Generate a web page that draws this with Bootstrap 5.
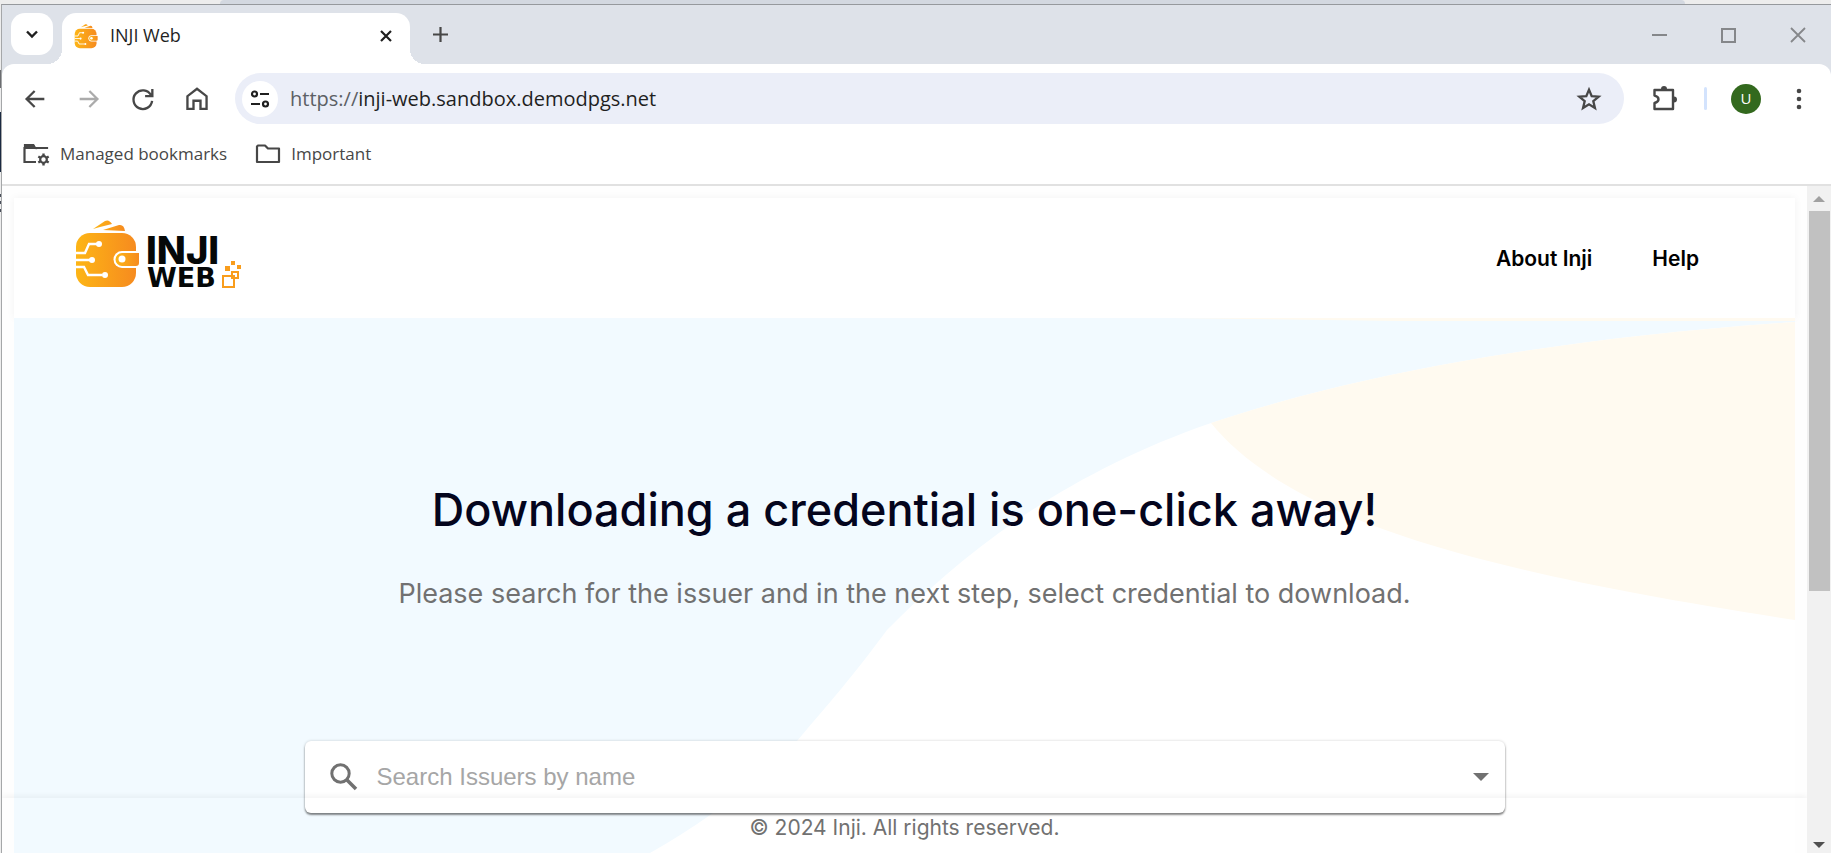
<!DOCTYPE html>
<html lang="en">
<head>
<meta charset="utf-8">
<meta name="viewport" content="width=device-width, initial-scale=1">
<title>INJI Web</title>
<link href="https://cdn.jsdelivr.net/npm/bootstrap@5.3.0/dist/css/bootstrap.min.css" rel="stylesheet">
<style>
  body { background: linear-gradient(#ededed 70px, #6b6d70 70px 88px, #ededed 88px 112px, #1b2a41 112px 172px, #ededed 172px 194px, #4a4f5a 194px 197px, #ededed 197px 201px, #4a4f5a 201px 204px, #ededed 204px 209px, #4a4f5a 209px 212px, #ededed 212px); font-family: "Open Sans", sans-serif; color: #474747; }
  .backdrop { height: 4px; }
  .backdrop span { display: block; height: 4px; margin-left: 12%; width: 80%; background: #d3d8e0; border-radius: 12px 12px 0 0; }
  .browser { margin-left: 1px; border-left: 1px solid #a5a7a9; border-top: 1px solid #96999d; background: #fff; }
  .icon-btn { border: 0; background: none; padding: 0; color: #474747; display: flex; align-items: center; justify-content: center; }
  .tabstrip { background: #dee2e9; height: 59px; }
  .tab-search { width: 42px; height: 42px; margin: 8px 9px 0; background: #fff; border-radius: 14px; color: #1f1f1f; }
  .tab-item { position: relative; width: 348px; height: 51px; margin-top: 8px; padding: 0 17px 6px 12px; background: #fff; border-radius: 14px 14px 0 0; color: #1f1f1f; font-size: 18px; }
  .tab-item .icon-btn { color: #1f1f1f; }
  .tab-item::before, .tab-item::after { content: ""; position: absolute; bottom: 0; width: 15px; height: 15px; }
  .tab-item::before { right: 100%; background: radial-gradient(circle at 0 0, transparent 15px, #fff 15px); }
  .tab-item::after { left: 100%; background: radial-gradient(circle at 100% 0, transparent 15px, #fff 15px); }
  .new-tab { width: 36px; margin-left: 12px; height: 59px; }
  .win-controls { gap: 53px; padding-right: 25px; }
  .win-controls .icon-btn { color: #85878a; }
  .toolbar-wrap { background: #dee2e9; }
  .toolbar-row { background: #fff; height: 69px; border-radius: 12px 12px 0 0; padding: 0 18px 0 19px; gap: 24px; }
  .nav-btns { gap: 26px; }
  .omnibox { height: 51px; background: #ebeef8; border-radius: 26px; padding: 0 21px 0 7px; }
  .site-info { width: 36px; height: 36px; border-radius: 50%; background: #fff; color: #1f1f1f; }
  .url-text { font-size: 20px; color: #1f1f1f; margin-left: 12px; }
  .url-text span { color: #5c6065; }
  .tb-divider { width: 3px; height: 23px; background: #d3e3fd; border-radius: 2px; }
  .avatar { width: 30px; height: 30px; border-radius: 50%; background: #33691e; color: #fff; font-size: 15px; }
  .bookmarks { height: 51px; padding: 0 20px 10px; gap: 28px; font-size: 17px; }
  .bookmarks a { color: #474747; text-decoration: none; gap: 10px; }
  .edge { border-top: 2px solid #e1e1e1; }
  .viewport { font-family: Inter, sans-serif; background: #fefefe; }
  .page-body { padding: 12px 12px 0; }
  .site-header { height: 120px; padding: 0 96px 0 60px; background: #fff; box-shadow: 0 0 8px rgba(0,0,0,.05); flex: none; }
  .site-header nav { gap: 60px; padding-top: 2px; }
  .site-header nav a { color: #000; font-weight: 600; font-size: 21px; text-decoration: none; }
  .hero { background: #fff; }
  .hero-art { inset: 0; width: 100%; height: 100%; }
  .hero-in { padding-top: 162px; }
  .hero h1 { font-size: 45px; line-height: 60px; font-weight: 500; color: #04051d; margin: 0; }
  .hero p { font-size: 27px; line-height: 36px; color: #717171; margin: 36px 0 0; }
  .search-box { width: 1200px; max-width: 90%; height: 72px; margin-top: 129px; background: #fff; border-radius: 6px; padding: 0 16px 0 24px; box-shadow: 0 2px 2px rgba(0,0,0,.45), 0 0 3px rgba(0,0,0,.18); }
  .search-box input { border: 0; outline: 0; background: none; font: 24px "Liberation Sans", sans-serif; color: #717171; margin-left: 16px; min-width: 0; }
  .search-box input::placeholder { color: #a6a6a6; opacity: 1; }
  .site-footer { left: 0; right: 0; bottom: 0; height: 55px; padding-top: 14px; font-size: 21px; line-height: 32px; color: #717171; box-shadow: 0 -2px 6px rgba(0,0,0,.05); }
  .scroll-col { width: 24px; background: #f1f1f1; padding: 10px 2px 5px; flex: none; }
  .thumb { height: 380px; background: #c1c1c1; width: 21px; margin-top: 9px; }
</style>
</head>
<body class="vh-100 overflow-hidden d-flex flex-column">
<div class="backdrop"><span></span></div>
<div class="browser flex-grow-1 d-flex flex-column overflow-hidden">

  <div class="tabstrip d-flex">
    <button class="icon-btn tab-search" aria-label="Search tabs"><svg width="14" height="14" viewBox="0 0 14 14" fill="none" stroke="currentColor" stroke-width="2.4"><path d="M2 4.500l5 5 5-5"/></svg></button>
    <div class="tab-item d-flex align-items-center">
      <svg width="24" height="26" viewBox="0 0 66 70"><use href="#wallet"/></svg>
      <span class="ms-2 ps-1 flex-grow-1">INJI Web</span>
      <button class="icon-btn" aria-label="Close tab"><svg width="14" height="14" viewBox="0 0 14 14" stroke="currentColor" stroke-width="2.2"><path d="M2 2l10 10M12 2L2 12"/></svg></button>
    </div>
    <button class="icon-btn new-tab" aria-label="New tab"><svg width="17" height="17" viewBox="0 0 17 17" stroke="currentColor" stroke-width="2.2"><path d="M8.500 1v15M1 8.500h15"/></svg></button>
    <div class="win-controls d-flex align-items-center ms-auto">
      <button class="icon-btn" aria-label="Minimize"><svg width="16" height="16" viewBox="0 0 16 16"><path d="M0 7h15v2H0z" fill="currentColor"/></svg></button>
      <button class="icon-btn" aria-label="Maximize"><svg width="16" height="16" viewBox="0 0 16 16" fill="none" stroke="currentColor" stroke-width="2"><path d="M1 2h13v13H1z"/></svg></button>
      <button class="icon-btn" aria-label="Close"><svg width="16" height="16" viewBox="0 0 16 16" stroke="currentColor" stroke-width="1.800"><path d="M1 1l14 14M15 1L1 15"/></svg></button>
    </div>
  </div>

  <div class="toolbar-wrap">
    <div class="toolbar-row d-flex align-items-center">
      <div class="nav-btns d-flex">
        <button class="icon-btn" aria-label="Back"><svg width="28" height="28" viewBox="0 0 24 24" fill="currentColor"><path d="M7.200 13l5.200 5.200-1.400 1.400L3.400 12 11 4.400l1.400 1.400L7.200 11H20v2z"/></svg></button>
        <button class="icon-btn" aria-label="Forward"><svg width="28" height="28" viewBox="0 0 24 24" fill="#ababab"><path d="M16.800 13l-5.200 5.200 1.400 1.400 7.600-7.600L13 4.400l-1.400 1.400 5.200 5.200H4v2z"/></svg></button>
        <button class="icon-btn" aria-label="Reload"><svg width="28" height="28" viewBox="0 0 24 24" fill="none" stroke="currentColor" stroke-width="2"><path d="M18.800 8.600A8 8 0 1 0 19.800 13.600M20 3.500V9.500h-6.200"/></svg></button>
        <button class="icon-btn" aria-label="Home"><svg width="28" height="28" viewBox="0 0 24 24" fill="none" stroke="currentColor" stroke-width="2"><path d="M3.800 20.500V9.600L12 3.200l8.200 6.400v10.900h-5.200v-7H9v7z"/></svg></button>
      </div>
      <div class="omnibox d-flex align-items-center flex-grow-1">
        <button class="icon-btn site-info" aria-label="View site information"><svg width="20" height="20" viewBox="0 0 20 20" fill="none" stroke="currentColor" stroke-width="2.200"><circle cx="4.500" cy="5" r="2.500"/><path d="M10 5h9M1 15h9"/><circle cx="15.500" cy="15" r="2.500"/></svg></button>
        <div class="url-text flex-grow-1"><span>https://</span>inji-web.sandbox.demodpgs.net</div>
        <button class="icon-btn" aria-label="Bookmark this page"><svg width="28" height="28" viewBox="0 0 24 24" fill="none" stroke="currentColor" stroke-width="2"><path d="M12 4l2.300 5.500 6 .5-4.600 3.900 1.400 5.800-5.100-3.100-5.100 3.100 1.400-5.800L3.700 10l6-.5z"/></svg></button>
      </div>
      <button class="icon-btn" aria-label="Extensions"><svg width="32" height="32" viewBox="0 0 32 32"><path d="M6.500 7H25v19H6.500V20q4-1 4-3.800t-4-3.600V7z" fill="none" stroke="#474747" stroke-width="2.400" stroke-linejoin="round"/><path d="M13 6a3 3 0 0 1 6 0zM26 13.500a3 3 0 0 1 0 6z" fill="#474747"/></svg></button>
      <span class="tb-divider"></span>
      <button class="icon-btn avatar" aria-label="Profile">U</button>
      <button class="icon-btn" aria-label="Menu"><svg width="28" height="24" viewBox="0 0 28 24" fill="currentColor"><circle cx="14" cy="4" r="2.300"/><circle cx="14" cy="12" r="2.300"/><circle cx="14" cy="20" r="2.300"/></svg></button>
    </div>
  </div>
  <div class="bookmarks d-flex align-items-center">
    <a href="#" class="d-flex align-items-center"><svg width="28" height="24" viewBox="0 0 28 24"><path d="M25 7V6H2.500V20H14M3 5V3h8l2 3z" fill="none" stroke="#474747" stroke-width="2.200"/><path d="M2 2h10l2 4H2z" fill="#474747"/><circle cx="21.500" cy="17.500" r="3.300" fill="none" stroke="#474747" stroke-width="2.200"/><path d="M21.500 11.500v3M21.500 20.500v3M16.300 14.500l2.600 1.500M24.100 19l2.600 1.500M16.300 20.500l2.600-1.500M24.100 16l2.600-1.500" stroke="#474747" stroke-width="2.400"/></svg><span>Managed bookmarks</span></a>
    <a href="#" class="d-flex align-items-center"><svg width="26" height="22" viewBox="0 0 26 22" fill="none" stroke="#474747" stroke-width="2.200" stroke-linejoin="round"><path d="M3 2.500h7l3 3h11v13.500H2V3.500z"/></svg><span>Important</span></a>
  </div>
  <div class="edge"></div>

  <div class="viewport flex-grow-1 d-flex overflow-hidden">
    <main class="position-relative flex-grow-1 d-flex flex-column page-body overflow-hidden">
      <header class="site-header d-flex align-items-center justify-content-between">
        <a href="#" class="d-flex" aria-label="Inji Web home"><svg width="170" height="76" viewBox="0 2 170 76">
          <defs><linearGradient id="amber" x1="0" x2="1"><stop offset="0" stop-color="#fdb515"/><stop offset="1" stop-color="#f68b1f"/></linearGradient></defs>
          <g id="wallet">
            <path d="M19 11L31 3q4-2 7 3L26 9zM29 12l16-5q5-1 6 6z" fill="url(#amber)"/>
            <rect x="2" y="15" width="60" height="54" rx="14" fill="url(#amber)"/>
            <path d="M2 35h9l4-9h8M2 42h14M2 49h8l4 8h14" fill="none" stroke="#fff" stroke-width="2.400"/>
            <g fill="#fff"><circle cx="25" cy="26" r="3"/><circle cx="18" cy="42" r="3"/><circle cx="31" cy="57" r="3"/></g>
            <path d="M65 33H48a8 8 0 0 0 0 17h17z" fill="#fff"/>
            <path d="M65 35H48a6 6 0 0 0 0 13h14q3 0 3-3z" fill="url(#amber)"/>
            <circle cx="48" cy="41" r="3.500" fill="#fff"/>
          </g>
          <text x="72" y="46" font-family="Inter" font-weight="800" font-size="38" fill="#050808">INJI</text>
          <text x="73" y="69" font-family="DejaVu Sans" font-weight="700" font-size="27" fill="#050808">WEB</text>
          <g fill="none" stroke="#f99d1c" stroke-width="2"><path d="M149 58h11v11h-11zM158 54h6v6h-6z"/></g>
          <path d="M151 48h5v5h-5zM157 43h4v4h-4zM163 47h4v4h-4z" fill="#f99d1c"/>
        </svg></a>
        <nav class="d-flex"><a href="#">About Inji</a><a href="#">Help</a></nav>
      </header>
      <section class="hero position-relative flex-grow-1">
        <svg class="hero-art position-absolute" viewBox="14 318 1781 535" preserveAspectRatio="none">
          <path d="M14 318H1795V322C1560 338 1360 373 1211 423C1060 475 960 556 887 630C850 680 830 702 797 741Q735 805 650 853H14z" fill="#f2faff"/>
          <path d="M1795 322C1560 338 1360 373 1211 423C1290 520 1480 572 1795 620z" fill="#fffaf0"/>
          <path d="M1170 318H1795V321H1400z" fill="#fffaf0"/>
        </svg>
        <div class="hero-in position-relative d-flex flex-column align-items-center text-center">
          <h1>Downloading a credential is one-click away!</h1>
          <p>Please search for the issuer and in the next step, select credential to download.</p>
          <div class="search-box d-flex align-items-center">
            <svg width="30" height="30" viewBox="0 0 30 30" fill="none" stroke="#717171"><circle cx="11.500" cy="11.500" r="8.700" stroke-width="3"/><path d="M17.500 17.500l9.500 9.500" stroke-width="3.600"/></svg>
            <input class="flex-grow-1" type="text" placeholder="Search Issuers by name" aria-label="Search Issuers by name">
            <button class="icon-btn" aria-label="Show issuers"><svg width="16" height="8" viewBox="0 0 16 8"><path d="M0 0h16L8 8z" fill="#717171"/></svg></button>
          </div>
        </div>
      </section>
      <footer class="site-footer position-absolute text-center">© 2024 Inji. All rights reserved.</footer>
    </main>
    <div class="scroll-col d-flex flex-column align-items-center" aria-hidden="true">
      <svg width="12" height="6" viewBox="0 0 12 6"><path d="M0 6h12L6 0z" fill="#a0a0a0"/></svg>
      <div class="thumb"></div>
      <svg class="mt-auto" width="12" height="6" viewBox="0 0 12 6"><path d="M0 0h12L6 6z" fill="#505050"/></svg>
    </div>
  </div>
</div>
<script src="https://cdn.jsdelivr.net/npm/bootstrap@5.3.0/dist/js/bootstrap.bundle.min.js"></script>
</body>
</html>
